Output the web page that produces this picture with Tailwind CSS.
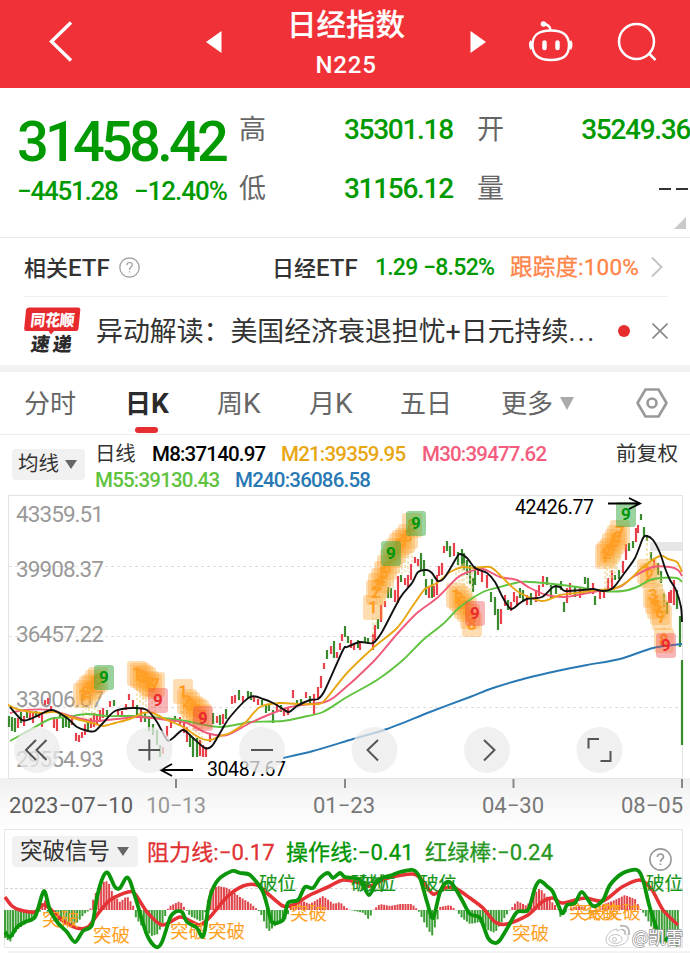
<!DOCTYPE html>
<html lang="zh-CN">
<head>
  <meta charset="UTF-8">
  <meta name="viewport" content="width=device-width, initial-scale=1.0">
  <title>日经指数 N225</title>
  <script src="https://cdn.jsdelivr.net/npm/@tailwindcss/browser@4"></script>
</head>
<body class="bg-white w-[690px] h-[953px] overflow-hidden font-['Roboto','Noto_Sans_CJK_SC',sans-serif] text-[#333] whitespace-nowrap">

  <header class="h-[88px] bg-[#f03137] text-white flex items-center">
    <svg class="ml-[46px] mb-[7px] w-[30px] h-[44px]" viewBox="46 18 30 44" fill="none" stroke="white" stroke-width="3.4"><path d="M71 21.500L51.500 40.500L71 59.500"/></svg>
    <svg class="ml-[130px] mb-1 w-[16px] h-[22px]" viewBox="0 0 16 22" fill="white"><path d="M0 11L15.500 0V22Z"/></svg>
    <div class="ml-[55px] w-[138px] flex flex-col items-center font-medium pt-[4px]">
      <h1 class="text-[29.5px] leading-[38px] font-medium [-webkit-text-stroke:0.2px_white]">日经指数</h1>
      <div class="text-[24px] leading-[42px] tracking-[0.8px]">N225</div>
    </div>
    <svg class="ml-[55px] mb-1 w-[16px] h-[22px]" viewBox="0 0 16 22" fill="white"><path d="M16 11L0.500 0V22Z"/></svg>
    <svg class="ml-[41px] mb-[4px] w-[48px] h-[44px]" viewBox="527 20 48 44" fill="none" stroke="white" stroke-width="2.4">
      <path d="M551 30.500C564 30.500 569 36 569 45C569 55 564 60 551 60S532.500 55 532.500 45C532.500 36 537 30.500 551 30.500Z"/>
      <path d="M550.500 30Q550 25 544 24"/>
      <circle cx="543.500" cy="24" r="2.800" fill="white" stroke="none"/>
      <path d="M531.500 41Q529.500 45 531.500 49M570 41Q572 45 570 49" stroke-width="3"/>
      <path d="M544.500 42.500V48M557.500 42.500V48" stroke-width="4.500" stroke-linecap="round"/>
    </svg>
    <svg class="ml-[41px] mb-[4px] w-[44px] h-[44px]" viewBox="616 20 44 44" fill="none" stroke="white" stroke-width="2.5"><circle cx="636.500" cy="41.500" r="17.500"/><path d="M649 53.500L655.500 60"/></svg>
  </header>

  <section class="relative h-[150px] border-b border-[#ebebeb] flex text-[#009a00] font-medium">
    <div class="w-[239px] pl-[17px] pt-[24px]">
      <div class="text-[56px] leading-[60px] tracking-[-3.8px]">31458.42</div>
      <div class="flex text-[26px] leading-[38px] tracking-[-1.25px]">
        <span class="w-[117px]">−4451.28</span><span class="tracking-[-1.050px]">−12.40%</span>
      </div>
    </div>
    <div class="w-[238px] pt-[25px] text-[28px] tracking-[-1.3px]">
      <div class="flex h-[34px] items-center mb-[25px]"><span class="w-[105px] text-[27px] font-normal text-[#666]">高</span>35301.18</div>
      <div class="flex h-[34px] items-center"><span class="w-[105px] text-[27px] font-normal text-[#666]">低</span>31156.12</div>
    </div>
    <div class="w-[213px] pt-[25px] text-[28px] tracking-[-1.3px]">
      <div class="flex h-[34px] items-center mb-[25px]"><span class="w-[105.500px] text-[27px] font-normal text-[#666]">开</span>35249.36</div>
      <div class="flex h-[34px] items-center justify-between"><span class="w-[105px] text-[27px] font-normal text-[#666]">量</span>
        <svg class="w-[32px] h-[4px] mr-px" viewBox="0 0 32 4" stroke="#333" stroke-width="2.2"><path d="M2 2H14M19 2H31"/></svg>
      </div>
    </div>
    <svg class="absolute right-[4px] bottom-[8px] w-[12px] h-[12px]" viewBox="0 0 12 12" fill="#c9c9c9"><path d="M12 0V12H0Z"/></svg>
  </section>

  <section class="ml-[24px] mr-[22px] h-[59px] border-b border-[#eee] flex items-center text-[22px] pt-[2px]">
    <span class="w-[95px] font-medium">相关<span class="text-[24px]">ETF</span></span>
    <svg class="mb-[2px] w-[21px] h-[21px]" viewBox="0 0 21 21" fill="none" stroke="#999" stroke-width="1.2"><circle cx="10.500" cy="10.500" r="9.700"/><path d="M7.800 8.300Q8 5.500 10.600 5.500T13.200 8.200Q13 9.500 11.500 10.500Q10.500 11.300 10.500 13M10.500 14.300V15.600"/></svg>
    <span class="ml-[132px] w-[103px] font-medium">日经<span class="text-[24px]">ETF</span></span>
    <span class="w-[48px] text-[23px] tracking-[-0.8px] font-medium text-[#009a00]">1.29</span>
    <span class="w-[87px] text-[23px] tracking-[-0.7px] font-medium text-[#009a00]">−8.52%</span>
    <span class="text-[22.500px] tracking-[0.2px] w-[141px] text-[#ff8447] [-webkit-text-stroke:0.3px_#ff8447]">跟踪度:100%</span>
    <svg class="w-[12px] h-[20px] -mt-[2px] shrink-0" viewBox="0 0 12 20" fill="none" stroke="#c4c4c4" stroke-width="2"><path d="M1 0.500L10.500 10L1 19.500"/></svg>
  </section>

  <section class="h-[68px] flex items-center">
    <svg class="ml-[24px] w-[57px] h-[52px]" viewBox="24 305 57 52" font-family="'Noto Sans CJK SC', sans-serif" font-weight="900">
      <path d="M29 307.500H78Q80.500 307.500 80.300 310L78.500 328.500Q78.300 331 76 331H54L51 334.500L48.500 331H26Q24 331 24.200 328.500L26 310Q26.300 307.500 29 307.500Z" fill="#e62a2d"/>
      <text x="30" y="326" font-size="16" textLength="44" lengthAdjust="spacingAndGlyphs" fill="white" transform="translate(30 326) skewX(-6) translate(-30 -326)">同花顺</text>
      <text x="30" y="351" font-size="19" textLength="41" fill="#2b2b2b" transform="translate(30 351) skewX(-8) translate(-30 -351)">速递</text>
    </svg>
    <span class="ml-[15px] w-[522px] text-[26.900px] pt-[2px]">异动解读：美国经济衰退担忧+日元持续<span class="tracking-[2.300px]">...</span></span>
    <span class="w-[12px] h-[12px] rounded-full bg-[#e62e30]"></span>
    <svg class="ml-[22px] w-[16px] h-[16px]" viewBox="0 0 16 16" stroke="#888" stroke-width="1.6"><path d="M0.500 0.500L15.500 15.500M15.500 0.500L0.500 15.500"/></svg>
  </section>

  <div class="h-[7px] bg-[#f2f2f2]"></div>

  <nav class="h-[63px] border-b border-[#ececec] flex items-center pl-[24px] text-[26px] text-[#666]">
    <span class="w-[101px] pt-[3px]">分时</span>
    <span class="w-[92px] pt-[3px] relative font-bold text-[#2b2b2b]">日<span class="text-[28px] leading-[30px]">K</span><i class="absolute left-[10px] bottom-[-9px] w-[23px] h-[6px] rounded-full bg-[#e62e30]"></i></span>
    <span class="w-[92px] pt-[3px]">周<span class="text-[28px] leading-[30px]">K</span></span>
    <span class="w-[91px] pt-[3px]">月<span class="text-[28px] leading-[30px]">K</span></span>
    <span class="w-[101px] pt-[3px]">五日</span>
    <span class="w-[59px] pt-[3px]">更多</span>
    <svg class="w-[14px] h-[13px]" viewBox="0 0 14 13" fill="#aaa"><path d="M0 0H14L7 13Z"/></svg>
    <svg class="ml-[62px] w-[32px] h-[30px]" viewBox="0 0 32 30" fill="none" stroke="#999" stroke-width="2.6"><path d="M9.500 1.500H22.500L30.500 15L22.500 28.500H9.500L1.500 15Z" stroke-linejoin="round"/><circle cx="16" cy="15" r="4.500"/></svg>
  </nav>

  <section class="h-[60px] flex pt-[6px] pl-[12px]">
    <div class="mt-[8px] w-[73px] h-[31px] rounded bg-[#f1f1f1] flex items-center pl-[6px] text-[20.500px]">均线
      <svg class="ml-[6px] w-[12px] h-[9px]" viewBox="0 0 12 9" fill="#666"><path d="M0 0H12L6 9Z"/></svg>
    </div>
    <div class="ml-[10px] flex-1 text-[20.500px] leading-[26px] font-medium tracking-[-0.8px]">
      <div class="flex">
        <span class="w-[57px] font-normal tracking-[-0.300px]">日线</span>
        <span class="w-[129px] text-black">M8:37140.97</span>
        <span class="w-[141px] text-[#e8a613]">M21:39359.95</span>
        <span class="w-[194px] text-[#f45c7d]">M30:39477.62</span>
        <span class="font-normal tracking-[0.200px]">前复权</span>
      </div>
      <div class="flex">
        <span class="w-[140px] text-[#5fc33f]">M55:39130.43</span>
        <span class="text-[#2878b4]">M240:36086.58</span>
      </div>
    </div>
  </section>

  <svg id="kline" class="block w-[690px] h-[334px]" viewBox="0 495 690 334" fill="none" font-family="Roboto, 'Noto Sans CJK SC', sans-serif">
    <defs>
      <linearGradient id="axis" x1="0" y1="0" x2="0" y2="1"><stop offset="0" stop-color="#f0f0f0"/><stop offset="0.5" stop-color="#f8f8f8"/><stop offset="1" stop-color="#fdfdfd"/></linearGradient>
    </defs>
    <rect x="0" y="778" width="690" height="49" fill="url(#axis)"/>
    <path d="M8.500 778.500V495.500H682.500V778.500Z" stroke="#e3e3e3" fill="#fff"/>
    <path d="M9 566.500H682M9 636.500H682M9 707.500H682" stroke="#dedede" stroke-dasharray="3 3"/>
    <rect x="650" y="542" width="32" height="9" fill="#e6e6e6"/>
    <g id="priceLabels" font-size="22.500" fill="#999">
      <text x="16" y="522" textLength="88">43359.51</text>
      <text x="16" y="577" textLength="88">39908.37</text>
      <text x="16" y="642" textLength="88">36457.22</text>
      <text x="16" y="707" textLength="88">33006.07</text>
      <text x="16" y="767" textLength="88">29554.93</text>
    </g>
    <g id="candles" stroke-width="2.2"></g>
    <g id="marks"></g>
    <g id="averages" stroke-width="1.9" stroke-linejoin="round"></g>
    <g id="nines" font-size="17" font-weight="700" text-anchor="middle"></g>
    <g stroke="#000" stroke-width="1.900">
      <path d="M193 770H161M172 764L161 770L172 776"/>
      <path d="M608 503.500H640M629 498L640 503.500L629 509"/>
    </g>
    <g font-size="19.500" fill="#000">
      <text x="207" y="776" textLength="79">30487.67</text>
      <text x="515" y="514" textLength="79">42426.77</text>
    </g>
    <g id="buttons" fill="#ebebeb" fill-opacity="0.75">
      <circle cx="37" cy="750" r="23"/><circle cx="149.500" cy="750" r="23"/><circle cx="262" cy="750" r="23"/>
      <circle cx="374.500" cy="750" r="23"/><circle cx="487" cy="750" r="23"/><circle cx="599.500" cy="750" r="23"/>
    </g>
    <g stroke="#555" stroke-width="2">
      <path d="M36 740L26 750L36 760M46.500 740L36.500 750L46.500 760"/>
      <path d="M138.500 750H160M149.300 739.500V760.500"/>
      <path d="M251 750H273"/>
      <path d="M378 740L367.500 750L378 760.500"/>
      <path d="M484 740L494.500 750L484 760.500"/>
      <path d="M588.500 748.500V739H599M600.500 761H610.500V751"/>
    </g>
    <path d="M176 779V788M345 779V788M513.500 779V788M682 779V788" stroke="#888" stroke-width="2"/>
    <g font-size="22" fill="#777">
      <text x="9" y="812.500" textLength="124" fill="#5e5e5e">2023−07−10</text>
      <text x="146" y="812.500" textLength="60" fill="#999">10−13</text>
      <text x="313" y="812.500" textLength="62">01−23</text>
      <text x="482" y="812.500" textLength="62">04−30</text>
      <text x="621" y="812.500" textLength="62">08−05</text>
    </g>
  </svg>

  <section class="ml-[4px] mr-[7px] h-[37px] border-t border-x border-[#e6e6e6] flex pt-[6px] pl-[7px] text-[22px]">
    <div class="w-[126px] h-[31px] rounded bg-[#f1f1f1] flex items-center pl-[8px] text-[22.500px] shrink-0">突破信号
      <svg class="ml-[7px] w-[12px] h-[9px]" viewBox="0 0 12 9" fill="#666"><path d="M0 0H12L6 9Z"/></svg>
    </div>
    <span class="ml-[9px] w-[139px] leading-[34px] tracking-[0.100px] text-[#e03133] [-webkit-text-stroke:0.3px_#e03133]">阻力线:−0.17</span>
    <span class="w-[139px] leading-[34px] tracking-[0.100px] text-[#009400] [-webkit-text-stroke:0.3px_#009400]">操作线:−0.41</span>
    <span class="w-[224px] leading-[34px] tracking-[0.150px] text-[#279622] [-webkit-text-stroke:0.3px_#279622]">红绿棒:−0.24</span>
    <svg class="mt-[12px] w-[23px] h-[23px] shrink-0" viewBox="0 0 23 23" fill="none" stroke="#999" stroke-width="1.6"><circle cx="11.500" cy="11.500" r="10.600"/><path d="M8.300 9Q8.500 6 11.500 6T14.500 9Q14.200 10.500 12.600 11.500Q11.500 12.300 11.500 14M11.500 15.500V17"/></svg>
  </section>

  <svg id="signal" class="block w-[690px] h-[87px] overflow-visible" viewBox="0 866 690 87" fill="none" font-family="'Noto Sans CJK SC', sans-serif" font-size="18.500">
    <path d="M4.500 866V947.500H682.500V866M8 952H690" stroke="#e6e6e6"/>
    <path d="M5 888.500H682" stroke="#d5d5d5" stroke-dasharray="3 2"/>
    <g id="bars" stroke-width="2"></g>
    <path id="resist" stroke="#e53335" stroke-width="3.600" stroke-linejoin="round"/>
    <g fill="#ffa01e">
      <text x="42" y="926">突破</text><text x="93" y="941.500">突破</text><text x="170" y="938">突破</text><text x="208" y="938">突破</text>
      <text x="290" y="920">突破</text><text x="512" y="939.500">突破</text><text x="569" y="919">突破</text><text x="583" y="919">突破</text><text x="604" y="919">突破</text>
    </g>
    <g fill="#149414" stroke="#149414" stroke-width="0.200">
      <text x="259" y="889.500">破位</text><text x="351" y="889.500">破位</text><text x="359" y="889.500">破位</text><text x="420" y="889.500">破位</text><text x="646" y="889.500">破位</text>
    </g>
    <path id="oper" stroke="#0a950a" stroke-width="3.800" stroke-linejoin="round"/>
    <g fill="#fff" stroke="#bbb" stroke-width="0.900">
      <path d="M617 929C608 930 602 941 609 945C616 948 629 944 628 937C628 934 625 934 624 934C626 929 623 928 617 931Z"/>
      <ellipse cx="615.500" cy="939" rx="6.500" ry="4.500"/>
      <circle cx="614.500" cy="939.500" r="2"/>
      <path d="M620 926Q630 924 629 935" fill="none" stroke-width="2"/>
      <path d="M622 930Q626 930 625 934" fill="none" stroke-width="1.500"/>
    </g>
    <text x="632" y="943.500" font-size="17.500" fill="#fff" stroke="#999" stroke-width="1.600" paint-order="stroke" textLength="51">@凯雷</text>
  </svg>

  <script>
    const NS = 'http://www.w3.org/2000/svg';
    const RED = '#e8414b';
    const GREEN = '#3a8a2e';

    function add(parent, tag, attrs, text) {
      const el = document.createElementNS(NS, tag);
      Object.entries(attrs).forEach(([k, v]) => el.setAttribute(k, v));
      if (text) el.textContent = text;
      document.getElementById(parent).appendChild(el);
    }

    // smooth curve through "x,y x,y ..." points
    function curve(str) {
      const p = str.trim().split(/\s+/).map(s => s.split(',').map(Number));
      let d = `M${p[0]}`;
      for (let i = 0; i < p.length - 1; i++) {
        const a = p[i - 1] || p[i], b = p[i], c = p[i + 1], e = p[i + 2] || c;
        d += `C${b[0] + (c[0] - a[0]) / 7},${b[1] + (c[1] - a[1]) / 7} ${c[0] - (e[0] - b[0]) / 7},${c[1] - (e[1] - b[1]) / 7} ${c}`;
      }
      return d;
    }

    // x, high, low, colour
    const candles = `9,716,727,g 12,717,731,g 15,718,732,g 18,718,728,r 21,712,723,g 24,716,726,r 27,712,718,g 30,713,719,r 33,713,723,r 36,711,717,g 39,712,718,r 42,714,727,r 45,700,705,r 48,698,704,r 51,706,712,r 54,717,728,r 57,719,731,r 60,712,718,g 63,718,728,g 66,718,727,g 69,720,728,g 72,718,725,r 76,733,741,r 79,735,742,r 82,732,738,r 85,724,735,r 88,722,731,g 91,718,728,r 94,713,727,r 97,714,724,r 100,710,722,r 103,708,718,r 107,710,717,g 110,701,707,r 114,700,706,g 118,709,716,r 122,711,717,r 126,704,710,r 129,694,700,r 133,700,708,r 137,705,717,g 141,708,722,r 145,712,722,g 149,716,731,g 153,724,735,g 157,730,745,g 160,745,757,g 163,747,754,r 167,726,737,r 171,722,728,r 175,716,722,g 180,717,725,r 184,722,733,r 187,727,742,r 190,735,747,g 193,737,757,g 197,738,757,g 200,740,756,r 203,745,757,r 206,747,757,r 210,733,742,r 213,713,724,g 217,716,723,r 220,715,725,g 223,714,724,r 226,709,719,g
      232,696,704,r 235,695,703,r 239,690,700,g 243,696,702,r 248,691,698,g 251,692,700,g 254,697,702,r 258,699,705,r 262,700,705,g 266,705,713,g 269,704,711,g 273,710,723,g 277,703,711,r 281,705,712,g 284,708,716,r 288,708,715,r 293,690,698,r 297,700,706,g 301,699,704,g 306,692,698,r 310,696,703,g 314,694,714,r 318,687,700,r 321,676,688,r 324,663,669,r 327,650,659,g 331,646,654,r 334,641,658,g 337,652,658,r 340,643,650,r 342,634,641,r 345,626,637,g 348,636,643,g 351,640,648,r 354,643,650,r 358,640,648,g 360,641,650,r 365,637,643,g 368,638,644,g
      373,634,650,r 375,625,640,r 378,619,629,g 381,605,622,r 385,601,607,r 388,587,598,g 391,588,598,g 395,590,602,r 398,576,603,r 401,575,582,g 405,578,585,r 408,575,587,r 411,564,580,r 415,557,563,r 418,559,566,r 421,553,570,g 424,560,576,g 426,579,595,g 429,587,598,r 432,579,598,g 434,586,597,r 437,575,595,r 439,566,576,r 442,563,575,r 444,546,553,r 447,541,551,g 450,546,557,g 454,543,556,r 458,552,565,g 462,549,566,g 464,553,570,g 467,560,575,g 470,565,584,g 473,578,592,g 475,566,585,g 478,567,575,r 482,571,582,r 487,575,588,r 491,592,602,g 495,597,615,g 498,609,630,g 501,609,624,r 505,595,606,r 508,600,610,g 511,602,611,r 514,592,602,r 517,596,605,r
      520,588,598,g 523,590,602,g 527,595,605,r 531,593,605,g 536,590,602,r 539,585,596,r 543,576,587,r 547,577,585,g 551,585,598,g 556,584,594,g 561,581,590,g 564,602,612,g 567,588,603,r 570,583,595,r 575,587,597,g 580,588,598,r 585,577,584,g 588,578,590,g 593,583,594,r 595,596,605,g 600,590,599,r 604,590,598,r 608,578,590,r 612,570,590,r 615,575,580,g 619,570,579,g 623,561,573,r 626,544,560,r 629,543,551,g 633,541,548,g 636,528,542,r 638,525,533,r 641,514,520,g 644,527,537,g 647,535,541,g 651,552,560,g 654,558,570,r 658,563,575,g 661,571,583,g 664,593,607,g 667,602,614,g 669,592,603,r 671,590,603,r 674,580,605,r 677,590,609,g 680,616,647,g 682,660,745,g`;
    candles.split(/\s+/).forEach(c => {
      const [x, hi, lo, col] = c.split(',');
      add('candles', 'path', { d: `M${x} ${hi}V${lo}`, stroke: col === 'r' ? RED : GREEN });
    });

    const averages = [
      ['#2878b4', '283,758 313,751 353,739 387,729 430,712 470,697 493,688 527,678 557,671 587,665 620,659 653,648 682,644'],
      ['#5fc33f', '10,741 30,730 50,719 67,717 87,714 107,716 130,716 150,717 180,720 200,724 220,727 240,724 250,722 283,721 303,717 323,712 347,697 377,680 403,660 423,640 443,624 460,607 483,592 500,587 520,582 530,582 553,584 577,587 603,591 623,591 637,587 650,580 660,578 677,578 682,582'],
      ['#f0597a', '10,713 25,710 50,710 70,716 93,721 117,719 140,717 167,720 187,723 207,733 227,735 250,723 273,713 290,707 310,704 325,702 337,695 373,662 397,634 417,613 437,598 457,578 468,572 483,569 500,577 517,580 530,588 547,595 565,597 583,594 603,590 620,587 633,577 653,567 670,567 678,570 682,576'],
      ['#e8a613', '8,705 20,710 42,713 55,712 70,717 80,720 93,723 103,726 115,723 130,719 143,713 153,713 167,720 183,727 200,738 210,740 220,736 230,733 245,723 260,707 280,703 297,704 318,704 325,700 347,673 373,648 397,628 412,607 425,589 437,583 450,572 463,567 473,568 490,567 500,575 510,585 520,593 542,601 560,595 577,593 597,590 613,589 627,582 643,567 660,556 668,559 677,562 682,572'],
      ['#111', '10,707 22,720 30,719 37,716 52,710 67,718 77,727 88,731 95,731 103,723 115,711 133,708 147,710 157,722 167,740 173,738 183,730 193,738 205,748 212,746 220,733 230,717 250,697 263,699 273,703 283,709 289,712 297,706 310,700 318,699 325,690 343,650 347,647 360,642 373,643 382,632 400,598 412,583 418,572 427,570 432,573 438,581 445,577 457,557 460,554 467,558 475,568 487,573 495,582 503,598 511,609 520,603 527,599 542,597 553,587 560,587 565,591 583,590 593,589 603,591 613,588 623,575 635,558 643,538 647,536 653,540 660,553 665,568 670,580 676,590 681,607 682,622']
    ];
    averages.forEach(([stroke, pts]) => add('averages', 'path', { d: curve(pts), stroke }));

    // count-up signals: overlapping squares with a dashed line to their candle
    const marks = `83,695,1,722 86,692,2,725 89,688,3,720 92,686,4,720 95,682,5,716 98,679,6,712
      137,673,1,700 140,675,2,705 143,677,3,708 146,679,4,710 149,683,5,712 152,686,6,716 155,684,7,718
      183,691,1,722 187,701,2,728 190,704,3,735 193,708,4,738 196,710,5,740 199,712,6,742 202,716,7,745
      373,607,1,640 376,592,2,625 378,585,3,620 381,580,4,604 384,573,5,600 387,567,6,590 390,561,7,590 393,555,8,590 396,550,4,576 399,545,5,574 402,542,6,574 405,540,7,572 408,536,8,572 412,525,8,562
      456,595,1,565 459,598,2,562 462,602,8,562 464,606,4,562 467,609,5,568 470,616,6,570 472,624,8,572
      605,556,1,590 607,553,2,590 610,550,3,585 612,545,4,580 615,541,5,575 617,537,6,572 620,532,7,562
      647,571,1,537 650,575,2,550 653,595,3,560 655,601,4,565 657,606,5,570 660,612,6,575 662,617,7,580 664,640,8,590`;
    marks.split(/\s+/).forEach(m => {
      const [x, y, n, end] = m.split(',').map(Number);
      add('marks', 'path', { d: `M${x} ${y}V${end}`, stroke: '#e8cf7a', 'stroke-width': 1, 'stroke-dasharray': '3 2' });
      add('marks', 'text', { x, y: y + 6, fill: '#ff9a1a', 'font-size': 17, 'font-weight': 700, 'text-anchor': 'middle' }, String(n));
      add('marks', 'rect', { x: x - 10, y: y - 12, width: 20, height: 25, rx: 3, fill: '#ffa02a', 'fill-opacity': 0.36 });
    });
    const nines = [[104, 677, 'g'], [391, 553, 'g'], [416, 523, 'g'], [626, 514, 'g'], [158, 700, 'r'], [203, 718, 'r'], [475, 613, 'r'], [666, 645, 'r']];
    nines.forEach(([x, y, c]) => {
      add('nines', 'rect', { x: x - 10, y: y - 12, width: 20, height: 25, rx: 3, fill: c === 'g' ? '#35a83b' : '#ee4047', 'fill-opacity': c === 'g' ? 0.5 : 0.38 });
      add('nines', 'text', { x, y: y + 6, fill: c === 'g' ? '#00960a' : '#ea2a2d' }, '9');
    });

    // histogram keyed by x, values interpolated between the keys
    const hist = '5,-28 10,-32 17,-20 25,-14 35,-8 41,0 44,14 48,-3 58,-10 72,-16 78,-12 84,-4 90,0 93,10 97,20 103,28 108,29 113,16 120,8 127,14 133,5 136,-8 143,-18 152,-26 158,-24 164,-10 167,0 170,4 180,9 184,3 190,-6 202,-12 206,0 210,20 218,24 228,22 240,13 250,7 258,0 262,-6 268,-22 275,-16 287,-8 290,3 300,10 310,6 323,14 334,6 340,8 345,3 350,0 364,-3 369,-10 373,0 380,6 390,4 400,6 412,6 418,0 426,-16 432,-26 438,-8 440,3 450,5 456,0 462,-8 470,-14 480,-12 488,-20 495,-23 503,-10 510,0 517,9 527,4 533,15 540,22 548,12 557,3 560,-7 566,-2 570,2 578,4 585,3 590,-4 598,-1 604,6 615,10 625,15 635,11 641,0 645,-5 652,-18 662,-32 670,-28 679,-20'.split(' ').map(s => s.split(',').map(Number));
    for (let x = 5, k = 0; x < 679; x += 2.67) {
      while (hist[k + 1][0] < x) k++;
      const [x0, v0] = hist[k], [x1, v1] = hist[k + 1];
      const v = v0 + (v1 - v0) * (x - x0) / (x1 - x0);
      add('bars', 'path', { d: `M${x} 910V${910 - v}`, stroke: v > 0 ? '#e0454b' : '#3c9f35' });
    }
    document.getElementById('resist').setAttribute('d', curve('5,897 12,906 20,910 35,912 42,905 48,907 62,920 77,928 88,927 97,915 110,900 128,892 135,894 147,912 162,925 180,917 192,922 200,925 210,917 227,897 243,886 257,885 267,893 283,906 293,905 310,895 328,887 343,880 360,883 370,886 388,878 413,874 422,880 433,894 445,888 455,888 470,898 483,908 495,922 507,924 528,915 542,902 553,898 562,903 585,898 603,901 622,887 640,880 652,890 663,910 678,925'));
    document.getElementById('oper').setAttribute('d', curve('5,932 10,937 17,927 25,922 35,917 42,895 45,892 50,910 58,923 67,932 75,942 83,931 92,925 97,897 103,877 108,873 115,887 120,888 126,878 130,881 137,903 147,935 156,947 162,942 170,918 175,912 182,912 187,922 197,928 202,937 205,930 210,897 218,880 232,871 240,873 250,875 262,890 267,905 272,922 283,920 288,903 298,900 305,887 313,888 320,878 328,873 333,878 340,873 345,877 360,880 369,895 378,880 392,875 400,872 413,870 420,878 427,902 433,918 440,892 447,882 453,885 462,900 470,914 480,918 488,938 495,943 500,940 508,927 517,912 528,910 535,888 540,881 548,887 553,892 562,913 567,905 575,903 582,892 593,906 603,900 610,885 623,873 637,870 643,880 650,908 662,942 670,935 678,946'));
  </script>
</body>
</html>
